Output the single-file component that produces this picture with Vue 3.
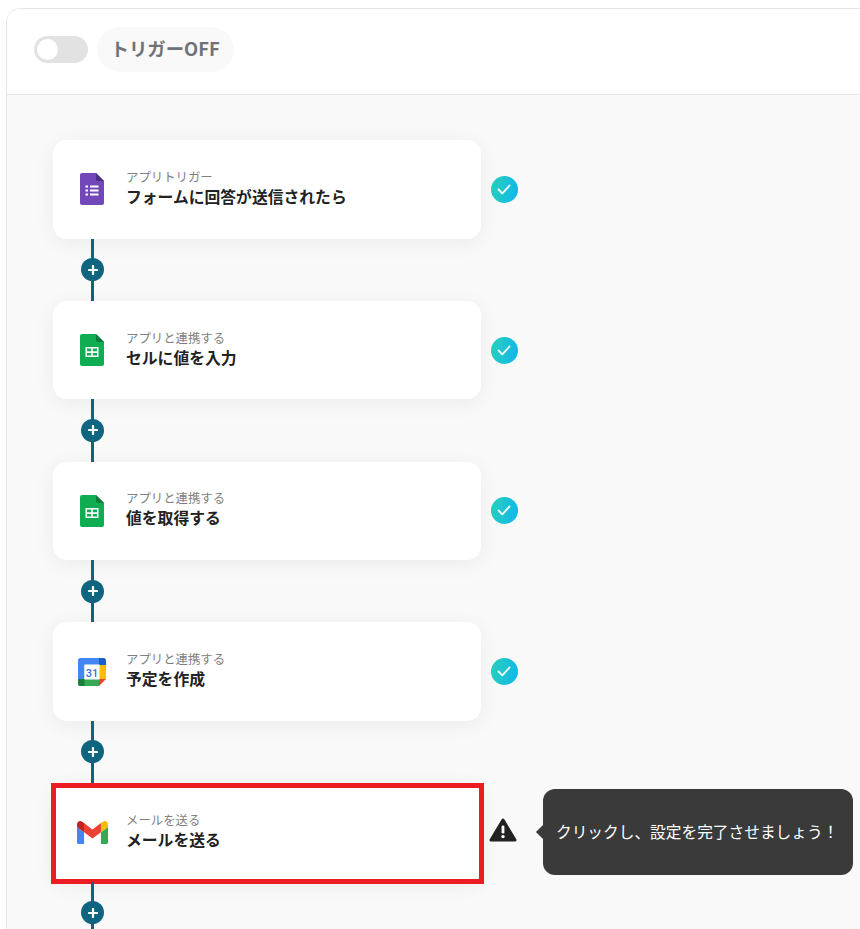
<script setup>
const steps = [
  { id: 'form', sub: 'アプリトリガー', title: 'フォームに回答が送信されたら', done: true },
  { id: 'sheet', sub: 'アプリと連携する', title: 'セルに値を入力', done: true },
  { id: 'sheet', sub: 'アプリと連携する', title: '値を取得する', done: true },
  { id: 'cal', sub: 'アプリと連携する', title: '予定を作成', done: true },
  { id: 'gmail', sub: 'メールを送る', title: 'メールを送る', done: false, flagged: true },
]
</script>

<template>
  <div class="page">
    <section class="panel">
      <header class="head">
        <span class="toggle"><span class="knob"></span></span>
        <span class="pill">トリガーOFF</span>
      </header>
      <div class="flow">
        <div v-for="(s, i) in steps" :key="i" class="step">
          <div class="row">
            <div class="card">
              <div class="icon">
                <svg v-if="s.id === 'form'" width="24" height="32" viewBox="0 0 24 32">
                  <path d="M2 0h14l8 8v22a2 2 0 0 1-2 2H2a2 2 0 0 1-2-2V2a2 2 0 0 1 2-2z" fill="#7248b9" />
                  <path d="M16 0l8 8h-6a2 2 0 0 1-2-2z" fill="#4b2e83" />
                  <g fill="#fff">
                    <rect x="5.500" y="12.500" width="2.500" height="2" />
                    <rect x="10" y="12.500" width="8.500" height="2" />
                    <rect x="5.500" y="16.500" width="2.500" height="2" />
                    <rect x="10" y="16.500" width="8.500" height="2" />
                    <rect x="5.500" y="20.500" width="2.500" height="2" />
                    <rect x="10" y="20.500" width="8.500" height="2" />
                  </g>
                </svg>
                <svg v-else-if="s.id === 'sheet'" width="24" height="32" viewBox="0 0 24 32">
                  <path d="M2 0h14l8 8v22a2 2 0 0 1-2 2H2a2 2 0 0 1-2-2V2a2 2 0 0 1 2-2z" fill="#0ead52" />
                  <path d="M16 0l8 8h-6a2 2 0 0 1-2-2z" fill="#0a7d3c" />
                  <path d="M5.500 13h13v10h-13z" fill="#fff" />
                  <path d="M7 14.500h4.200v2.800H7zM12.800 14.500H17v2.800h-4.200zM7 18.900h4.200v2.600H7zM12.800 18.900H17v2.600h-4.200z" fill="#0ead52" />
                </svg>
                <svg v-else-if="s.id === 'cal'" width="28" height="28" viewBox="0 0 28 28">
                  <path d="M2.500 0H21v7H6.500v14H0V2.500A2.500 2.500 0 0 1 2.500 0z" fill="#4285f4" />
                  <path d="M21 0h4.500A2.500 2.500 0 0 1 28 2.500V7h-7z" fill="#1a5fc8" />
                  <path d="M21 7h7v14h-7z" fill="#fbbc04" />
                  <path d="M6.500 21H21v7H2.500A2.500 2.500 0 0 1 0 25.500V21z" fill="#34a853" />
                  <path d="M0 21h6.500v7h-4A2.500 2.500 0 0 1 0 25.500z" fill="#188038" />
                  <path d="M21 21h7l-7 7z" fill="#ea4335" />
                  <rect x="6.500" y="6.500" width="15" height="15" fill="#fff" />
                  <text x="14" y="18.500" text-anchor="middle" class="cal-num">31</text>
                </svg>
                <svg v-else class="gmail" width="31" height="23.250" viewBox="52 42 88 66">
                  <path fill="#4285f4" d="M58 108h14V74L52 59v43c0 3.320 2.690 6 6 6" />
                  <path fill="#34a853" d="M120 108h14c3.320 0 6-2.690 6-6V59l-20 15" />
                  <path fill="#fbbc04" d="M120 48v26l20-15v-8c0-7.420-8.470-11.650-14.400-7.200" />
                  <path fill="#ea4335" d="M72 74V48l24 18 24-18v26L96 92" />
                  <path fill="#c5221f" d="M52 51v8l20 15V48l-5.600-4.200c-5.940-4.450-14.400-.22-14.400 7.200" />
                </svg>
              </div>
              <div class="text">
                <div class="sub">{{ s.sub }}</div>
                <div class="title">{{ s.title }}</div>
              </div>
              <span v-if="s.flagged" class="frame"></span>
            </div>
            <span v-if="s.done" class="check">
              <svg width="14" height="11" viewBox="0 0 14 11"><path d="M1.500 5.500l3.800 3.800 7.200-7.800" fill="none" stroke="#fff" stroke-width="1.800" stroke-linecap="round" stroke-linejoin="round" /></svg>
            </span>
            <template v-else>
              <svg class="warn" width="28" height="24" viewBox="0 0 28 24">
                <path d="M14 2L26 22H2z" fill="#222" stroke="#222" stroke-width="3" stroke-linejoin="round" />
                <rect x="12.600" y="7.500" width="2.800" height="8" rx="1.200" fill="#fff" />
                <circle cx="14" cy="18.600" r="1.700" fill="#fff" />
              </svg>
              <div class="tip">クリックし、設定を完了させましょう！</div>
            </template>
          </div>
          <div class="link">
            <span class="plus">
              <svg width="10" height="10" viewBox="0 0 10 10"><path d="M5 1v8M1 5h8" stroke="#fff" stroke-width="2.200" stroke-linecap="round" /></svg>
            </span>
          </div>
        </div>
      </div>
    </section>
  </div>
</template>

<style scoped>
.page {
  width: 860px;
  height: 929px;
  overflow: hidden;
  background: #fff;
  box-sizing: border-box;
  padding: 8px 0 0 6px;
  font-family: "Noto Sans CJK JP", "Noto Sans", sans-serif;
}
.panel {
  width: 900px;
  height: 1000px;
  box-sizing: border-box;
  border: 1px solid #e5e5e5;
  border-radius: 14px;
  overflow: hidden;
  background: #f9f9f9;
}
.head {
  height: 86px;
  box-sizing: border-box;
  border-bottom: 1px solid #e5e5e5;
  background: #fff;
  display: flex;
  align-items: center;
  padding: 0 0 5px 27px;
  gap: 9px;
}
.toggle {
  width: 54px;
  height: 27px;
  box-sizing: border-box;
  border-radius: 14px;
  background: #e2e2e2;
  padding: 3px;
  display: block;
}
.knob {
  display: block;
  width: 21px;
  height: 21px;
  border-radius: 50%;
  background: #fff;
}
.pill {
  height: 45px;
  line-height: 43px;
  padding: 0 14px 0 13.500px;
  border-radius: 23px;
  background: #f9f9f9;
  color: #6e7378;
  font-size: 18.400px;
  font-weight: 700;
}
.flow {
  padding: 45px 0 0 46px;
}
.step {
  display: flex;
  flex-direction: column;
}
.row {
  position: relative;
  display: flex;
  align-items: center;
  height: 98.500px;
}
.card {
  position: relative;
  width: 428px;
  height: 100%;
  box-sizing: border-box;
  border-radius: 14px;
  background: #fff;
  box-shadow: 0 4px 22px rgba(0, 0, 0, 0.06);
  display: flex;
  align-items: center;
  padding: 0 0 0 19px;
  gap: 14px;
}
.icon {
  width: 40px;
  height: 40px;
  display: flex;
  align-items: center;
  justify-content: center;
}
.gmail {
  margin-top: 1px;
}
.cal-num {
  font: 500 11px "Roboto", sans-serif;
  fill: #3d6fc9;
}
.text {
  display: flex;
  flex-direction: column;
  margin-top: -3px;
}
.sub {
  font-size: 12.400px;
  line-height: 18px;
  color: #808080;
}
.title {
  font-size: 15.800px;
  line-height: 22px;
  font-weight: 700;
  color: #222;
}
.frame {
  position: absolute;
  top: 0;
  left: -2px;
  right: -3px;
  bottom: -2px;
  border: 5px solid #ed1c24;
}
.check {
  width: 27px;
  height: 27px;
  margin-left: 9.500px;
  border-radius: 50%;
  background: linear-gradient(100deg, #2ad1b8, #0fb6ee);
  display: flex;
  align-items: center;
  justify-content: center;
}
.warn {
  margin-left: 8px;
  margin-top: -5px;
}
.tip {
  position: absolute;
  left: 490px;
  top: 6px;
  width: 310px;
  height: 86px;
  box-sizing: border-box;
  padding: 0 0 2px 13px;
  border-radius: 12px;
  background: #3a3a3a;
  color: #fff;
  font-size: 15.700px;
  display: flex;
  align-items: center;
  white-space: nowrap;
}
.tip::before {
  content: "";
  position: absolute;
  left: -5px;
  top: 38px;
  width: 10px;
  height: 10px;
  background: #3a3a3a;
  transform: rotate(45deg);
}
.link {
  position: relative;
  height: 62.250px;
  width: 3px;
  margin-left: 38px;
  background: #0f6480;
}
.plus {
  position: absolute;
  left: -10px;
  top: 19.500px;
  width: 23px;
  height: 23px;
  border-radius: 50%;
  background: #0f6480;
  display: flex;
  align-items: center;
  justify-content: center;
}
</style>
